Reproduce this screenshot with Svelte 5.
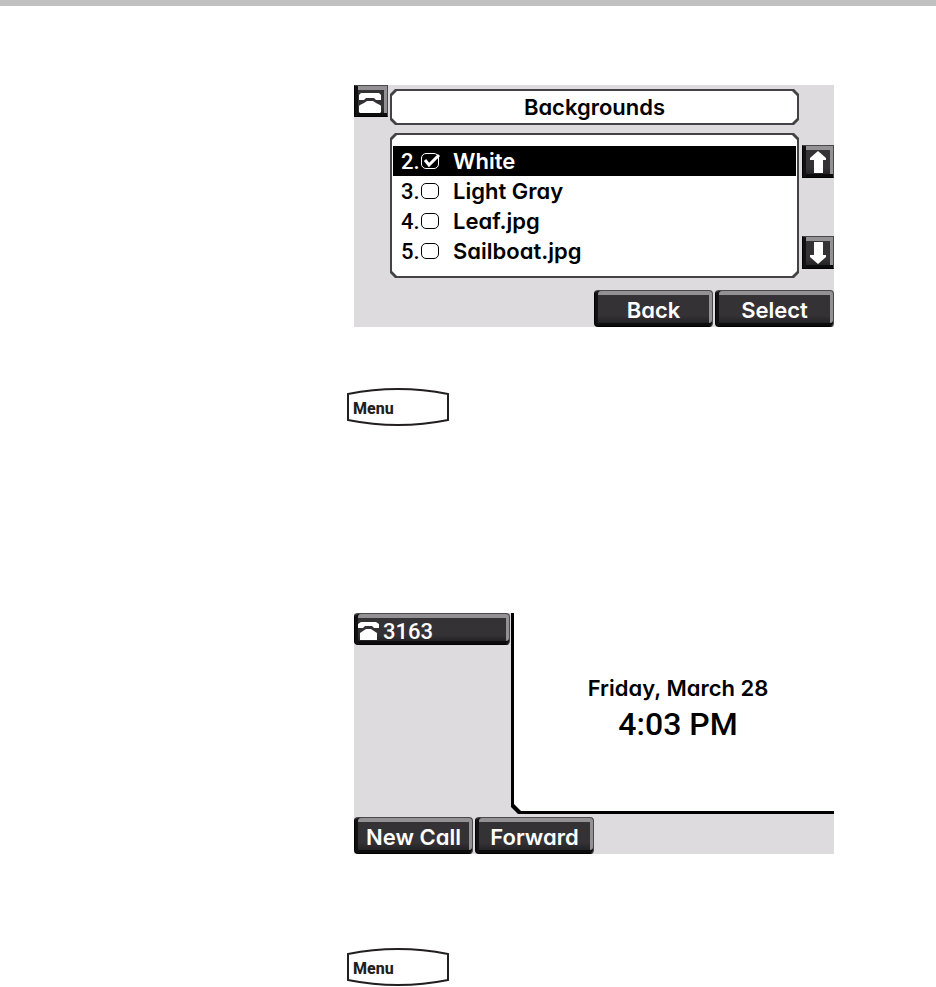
<script>
    let backgrounds = [
        { number: 2, name: 'White' },
        { number: 3, name: 'Light Gray' },
        { number: 4, name: 'Leaf.jpg' },
        { number: 5, name: 'Sailboat.jpg' }
    ];
    let selected = 2;

    function choose(number) {
        selected = number;
    }

    function move(step) {
        const next = selected + step;
        if (backgrounds.some((b) => b.number === next)) selected = next;
    }
</script>

<div class="page">
    <div class="rule"></div>

    <main>
        <section class="screen picker">
            <div class="tile" aria-hidden="true">
                <svg width="24" height="20" viewBox="0 0 24 20">
                    <path fill="#fff" d="M3 0H21L23 2V7H18L16 5H8L6 7H1V2ZM9 8H15L18 10L22 12L23 13V19L22 20H2L1 19V13L2 12L6 10Z" />
                </svg>
            </div>

            <div class="frame title">
                <h1>Backgrounds</h1>
            </div>

            <div class="frame list">
                <ul>
                    {#each backgrounds as bg}
                        <li class:active={selected === bg.number}>
                            <label>
                                <span class="number">{bg.number}.</span>
                                <span class="box">
                                    <input type="checkbox" checked={selected === bg.number} on:change={() => choose(bg.number)} />
                                    {#if selected === bg.number}
                                        <svg class="tick" width="20" height="18" viewBox="0 0 20 18">
                                            <path fill="none" stroke="#fff" stroke-width="3" d="M4 7L8 12L18 2" />
                                        </svg>
                                    {/if}
                                </span>
                                <span>{bg.name}</span>
                            </label>
                        </li>
                    {/each}
                </ul>
            </div>

            <div class="arrows">
                <button class="arrow" aria-label="Up" on:click={() => move(-1)}>
                    <svg width="16" height="22" viewBox="0 0 16 22">
                        <path fill="#fff" d="M8 0L16 7V9H13V22H4V9H0V7Z" />
                    </svg>
                </button>
                <button class="arrow" aria-label="Down" on:click={() => move(1)}>
                    <svg width="16" height="22" viewBox="0 0 16 22">
                        <path fill="#fff" d="M8 22L16 15V13H13V0H4V13H0V15Z" />
                    </svg>
                </button>
            </div>

            <div class="softkeys right">
                <button>Back</button>
                <button>Select</button>
            </div>
        </section>

        <button class="menu">
            <svg viewBox="0 0 102 38" width="102" height="38" aria-hidden="true">
                <path fill="#fff" stroke="#231f20" stroke-width="2" d="M1 6Q51 -4 101 6V32Q51 42 1 32Z" />
            </svg>
            <span>Menu</span>
        </button>

        <section class="screen idle">
            <div class="lines">
                <button class="line">
                    <svg width="21" height="18" viewBox="0 0 21 18" aria-hidden="true">
                        <path fill="#fff" d="M3 0H18L21 2V6H16L14 4H7L5 6H0V2ZM8 7H13L16 9L19 11V18H2V11L5 9Z" />
                    </svg>
                    3163
                </button>
            </div>

            <div class="clock">
                <div class="face">
                    <p class="date">Friday, March 28</p>
                    <p class="time">4:03 PM</p>
                </div>
            </div>

            <div class="softkeys">
                <button>New Call</button>
                <button>Forward</button>
            </div>
        </section>

        <button class="menu last">
            <svg viewBox="0 0 102 38" width="102" height="38" aria-hidden="true">
                <path fill="#fff" stroke="#231f20" stroke-width="2" d="M1 6Q51 -4 101 6V32Q51 42 1 32Z" />
            </svg>
            <span>Menu</span>
        </button>
    </main>
</div>

<style>
    :global(body) {
        margin: 0;
        background: #fff;
    }

    .page {
        font-family: Inter, "Liberation Sans", sans-serif;
        font-feature-settings: "cv11";
        font-size: 22px;
        font-weight: 600;
        color: #000;
    }

    .rule {
        height: 6px;
        background: #c0c0c0;
    }

    main {
        display: flex;
        flex-direction: column;
        align-items: flex-start;
        padding: 79px 102px 0 347px;
    }

    .screen {
        box-sizing: border-box;
        align-self: stretch;
        margin-left: 7px;
        background: #dddbde;
        display: grid;
    }

    .picker {
        grid-template-columns: 36px 1fr 35px;
        grid-template-rows: 40px 145px 41px;
        row-gap: 8px;
    }

    .tile,
    button.arrow,
    button.line,
    .softkeys button {
        box-sizing: border-box;
        display: flex;
        align-items: center;
        justify-content: center;
        border: 1px solid #4a484b;
        border-bottom-color: #000;
        border-left-color: #000;
        box-shadow: inset 3px 0 #111, inset 0 -3px #0c0c0c, inset 0 4px #939194, inset -3px 0 #939194;
        background: linear-gradient(#343235 70%, #1c1b1d);
        color: #fff;
        font: inherit;
        cursor: pointer;
    }

    .tile {
        width: 34px;
        height: 32px;
        padding: 3px 2px 0 0;
        cursor: default;
    }

    .frame {
        --cut: 5px;
        box-sizing: border-box;
        padding: 2px;
        background: #444246;
        clip-path: polygon(var(--cut) 0, calc(100% - var(--cut)) 0, 100% var(--cut), 100% calc(100% - var(--cut)), calc(100% - var(--cut)) 100%, var(--cut) 100%, 0 calc(100% - var(--cut)), 0 var(--cut));
    }

    .frame > * {
        box-sizing: border-box;
        height: 100%;
        margin: 0;
        background: #fff;
        clip-path: inherit;
    }

    .title {
        margin-top: 4px;
    }

    h1 {
        font-size: 22px;
        font-weight: 600;
        line-height: 32px;
        text-align: center;
    }

    .list {
        grid-column: 2;
    }

    ul {
        list-style: none;
        padding: 11px 1px;
    }

    li label {
        display: flex;
        align-items: center;
        height: 30px;
        padding-left: 8px;
        cursor: pointer;
    }

    li.active {
        background: #000;
        color: #fff;
    }

    .number {
        width: 20px;
        font-family: Roboto, sans-serif;
        font-weight: 500;
    }

    .box {
        position: relative;
        display: flex;
        margin-right: 14px;
    }

    .box input {
        appearance: none;
        width: 18px;
        height: 16px;
        margin: 0;
        border: 1px solid currentColor;
        border-radius: 5px;
        color: inherit;
    }

    .tick {
        position: absolute;
        left: 0;
        top: 0;
    }

    .arrows {
        display: flex;
        flex-direction: column;
        justify-content: space-between;
        padding: 12px 0 9px 3px;
    }

    button.arrow {
        width: 32px;
        height: 33px;
        padding: 0;
    }

    .softkeys {
        grid-column: 1 / -1;
        display: flex;
        gap: 2px;
    }

    .picker .softkeys {
        padding-top: 4px;
    }

    .softkeys.right {
        justify-content: flex-end;
    }

    .softkeys button {
        width: 119px;
        height: 37px;
        padding: 2px 0 0;
        border-radius: 4px;
    }

    .menu {
        position: relative;
        width: 102px;
        height: 38px;
        margin: 61px 0 187px;
        padding: 2px 0 0 6px;
        border: 0;
        background: none;
        color: #231f20;
        font-family: Roboto, "Liberation Sans", sans-serif;
        font-size: 16px;
        font-weight: 800;
        text-align: left;
        cursor: pointer;
    }

    .menu.last {
        margin: 94px 0 0;
    }

    .menu svg {
        position: absolute;
        left: 0;
        top: 0;
    }

    .menu span {
        position: relative;
    }

    .idle {
        grid-template-columns: 157px 1fr;
        grid-template-rows: 201px 37px;
        row-gap: 3px;
    }

    button.line {
        width: 156px;
        height: 32px;
        padding: 4px 0 0 3px;
        justify-content: flex-start;
        gap: 4px;
        border-radius: 4px;
        font-family: Roboto, sans-serif;
        font-weight: 500;
    }

    .clock {
        box-sizing: border-box;
        padding: 0 0 3px 3px;
        background: #000;
        clip-path: polygon(0 0, 100% 0, 100% 100%, 7px 100%, 0 calc(100% - 7px));
    }

    .face {
        box-sizing: border-box;
        height: 100%;
        padding: 60px 0 0 8px;
        background: #fff;
        clip-path: inherit;
        text-align: center;
    }

    .face p {
        margin: 0;
    }

    .date {
        font-size: 22px;
        line-height: 30px;
    }

    .time {
        font-family: Roboto, sans-serif;
        font-size: 32px;
        font-weight: 500;
        line-height: 42px;
    }
</style>
